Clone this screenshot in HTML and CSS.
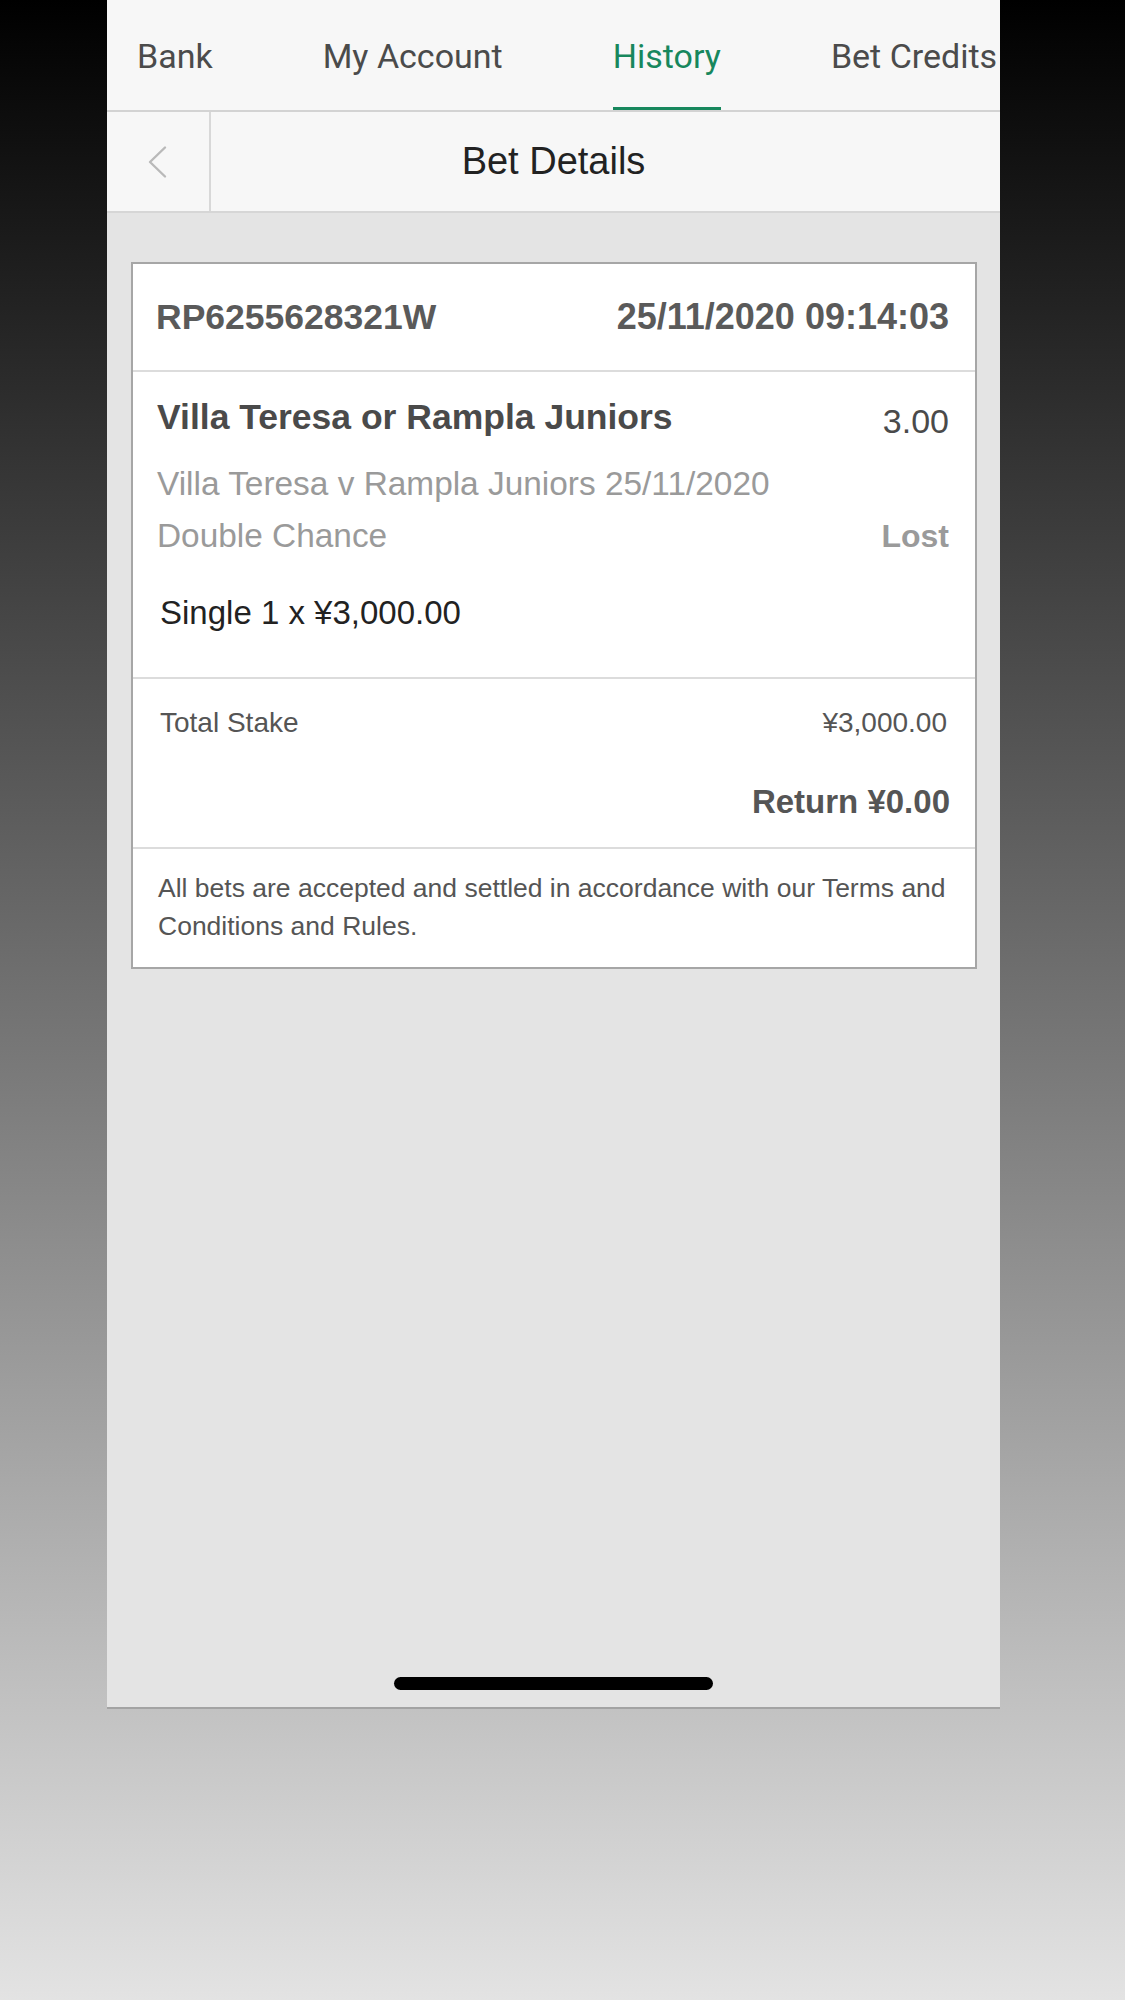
FILE: index.html
```html
<!DOCTYPE html>
<html lang="en">
<head>
<meta charset="utf-8">
<title>Bet Details</title>
<link rel="stylesheet" href="styles.css">
</head>
<body>
<div class="phone">
  <nav class="tabs">
    <span class="tab">Bank</span>
    <span class="tab">My Account</span>
    <span class="tab active">History</span>
    <span class="tab">Bet Credits</span>
  </nav>
  <header class="titlebar">
    <div class="back">
      <svg width="24" height="34" viewBox="0 0 24 34" aria-hidden="true">
        <polyline points="19,2.5 4,17 19,31.5" fill="none" stroke="#b9b9b9" stroke-width="2.4" stroke-linecap="round" stroke-linejoin="round"/>
      </svg>
    </div>
    <h1 class="title">Bet Details</h1>
  </header>
  <main class="content">
    <section class="card">
      <div class="card-head">
        <span class="ref">RP6255628321W</span>
        <span class="date">25/11/2020 09:14:03</span>
      </div>
      <div class="bet">
        <div class="row sel-row">
          <span class="selection">Villa Teresa or Rampla Juniors</span>
          <span class="odds">3.00</span>
        </div>
        <div class="row meta first-meta">
          <span>Villa Teresa v Rampla Juniors 25/11/2020</span>
        </div>
        <div class="row meta">
          <span>Double Chance</span>
          <span class="status">Lost</span>
        </div>
        <div class="stake-line">Single 1 x ¥3,000.00</div>
      </div>
      <div class="totals">
        <div class="row total">
          <span>Total Stake</span>
          <span>¥3,000.00</span>
        </div>
        <div class="return">Return ¥0.00</div>
      </div>
      <p class="terms">All bets are accepted and settled in accordance with our Terms and Conditions and Rules.</p>
    </section>
    <div class="home-indicator"></div>
  </main>
</div>
</body>
</html>
```

FILE: styles.css
```css
* {
  box-sizing: border-box;
}

html, body {
  margin: 0;
  padding: 0;
}

body {
  width: 1125px;
  height: 2000px;
  background: linear-gradient(to bottom, #000000 0%, #e3e3e3 100%);
  font-family: "Liberation Sans", Arial, sans-serif;
  overflow: hidden;
}

.phone {
  margin-left: 107px;
  width: 893px;
  height: 1709px;
  display: flex;
  flex-direction: column;
  background: #e4e4e4;
  border-bottom: 2px solid #a3a3a3;
}

/* top tabs */
.tabs {
  height: 112px;
  flex: none;
  display: flex;
  align-items: stretch;
  gap: 110px;
  padding: 5px 0 0 30px;
  background: #f7f7f7;
  border-bottom: 2px solid #d3d3d3;
  overflow: hidden;
  white-space: nowrap;
  font-family: Roboto, "Liberation Sans", sans-serif;
  font-size: 34px;
  color: #4b4b4b;
}

.tab {
  display: flex;
  align-items: center;
  flex: none;
  border-bottom: 3px solid transparent;
}

.tab.active {
  color: #17875d;
  border-bottom-color: #17875d;
}

/* title bar */
.titlebar {
  height: 101px;
  flex: none;
  display: flex;
  background: #f7f7f7;
  border-bottom: 2px solid #d6d6d6;
}

.back {
  width: 104px;
  flex: none;
  display: flex;
  align-items: center;
  justify-content: center;
  border-right: 2px solid #d8d8d8;
}

.back svg {
  display: block;
}

.title {
  flex: 1;
  margin: 0;
  padding-right: 104px;
  display: flex;
  align-items: center;
  justify-content: center;
  font-size: 38px;
  font-weight: normal;
  color: #222222;
}

/* content */
.content {
  flex: 1;
  display: flex;
  flex-direction: column;
  align-items: stretch;
}

.card {
  margin: 49px 23px 0 24px;
  background: #ffffff;
  border: 2px solid #a6a6a6;
}

.row {
  display: flex;
  justify-content: space-between;
  align-items: flex-start;
}

.card-head {
  height: 108px;
  display: flex;
  justify-content: space-between;
  align-items: center;
  padding: 0 26px 0 23px;
  border-bottom: 2px solid #dcdcdc;
  font-weight: bold;
  font-size: 36px;
  color: #5a5a5a;
}

.ref {
  font-size: 35.5px;
}

.bet {
  padding: 20px 26px 38px 24px;
  border-bottom: 2px solid #dcdcdc;
}

.sel-row {
  line-height: 50px;
}

.selection {
  font-size: 35.5px;
  font-weight: bold;
  color: #4a4a4a;
}

.odds {
  font-size: 34px;
  color: #4a4a4a;
  margin-top: 4px;
}

.meta {
  font-size: 33.4px;
  line-height: 52px;
  color: #9a9a9a;
}

.first-meta {
  margin-top: 12px;
}

.status {
  font-size: 32px;
  font-weight: bold;
  color: #9a9a9a;
}

.stake-line {
  margin-top: 25px;
  padding-left: 3px;
  font-size: 33px;
  line-height: 52px;
  color: #222222;
}

.totals {
  padding: 24px 28px 22px 27px;
  border-bottom: 2px solid #dcdcdc;
  color: #555555;
}

.total {
  font-size: 28px;
  line-height: 40px;
}

.return {
  margin-top: 36px;
  margin-right: -3px;
  text-align: right;
  font-size: 33px;
  line-height: 46px;
  font-weight: bold;
}

.terms {
  margin: 0;
  padding: 20px 26px 22px 25px;
  font-size: 26.5px;
  line-height: 38px;
  color: #555555;
}

.home-indicator {
  margin: auto auto 17px;
  width: 319px;
  height: 13px;
  border-radius: 7px;
  background: #000000;
}
```
